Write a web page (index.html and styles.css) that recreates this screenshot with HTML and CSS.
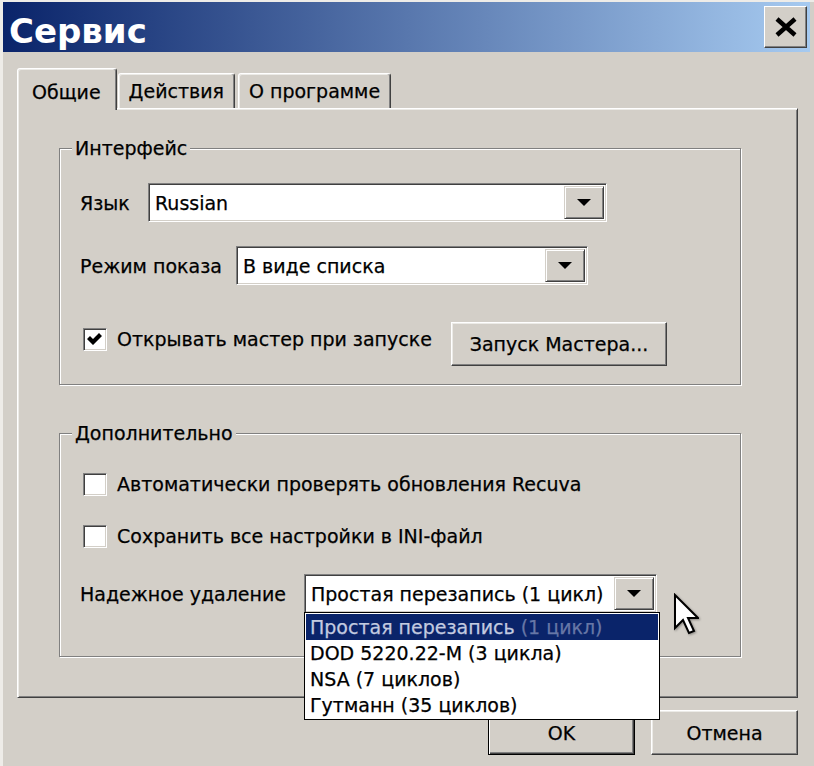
FILE: index.html
```html
<!DOCTYPE html>
<html lang="ru">
<head>
    <meta charset="UTF-8">
    <title>Сервис</title>
    <link rel="stylesheet" href="styles.css">
</head>
<body>
    <div class="window">
        <div class="titlebar">
            <span class="title">Сервис</span>
            <button class="close-btn" type="button">
                <svg width="24" height="20" viewBox="0 0 24 20">
                    <path d="M3 2 L21 18 M21 2 L3 18" stroke="#000" stroke-width="4.5" fill="none"/>
                </svg>
            </button>
        </div>

        <div class="content">
            <div class="tabs">
                <div class="tab active">Общие</div>
                <div class="tab">Действия</div>
                <div class="tab tab-about">О программе</div>
            </div>

            <div class="panel">
                <fieldset class="group group-ui">
                    <legend>Интерфейс</legend>
                    <div class="row">
                        <label class="label-lang">Язык</label>
                        <div class="combo combo-lang">
                            <span class="combo-value">Russian</span>
                            <span class="combo-btn"><i class="arrow"></i></span>
                        </div>
                    </div>
                    <div class="row row-mode">
                        <label class="label-mode">Режим показа</label>
                        <div class="combo combo-mode">
                            <span class="combo-value">В виде списка</span>
                            <span class="combo-btn"><i class="arrow"></i></span>
                        </div>
                    </div>
                    <div class="row row-wizard">
                        <label class="check check-wizard">
                            <span class="box">
                                <svg width="16" height="13" viewBox="0 0 16 13">
                                    <polygon points="0,6 3,3 6,6 12,0 15,3 6,12" fill="#000"/>
                                </svg>
                            </span>
                            Открывать мастер при запуске
                        </label>
                        <button class="btn btn-wizard" type="button">Запуск Мастера...</button>
                    </div>
                </fieldset>

                <fieldset class="group group-extra">
                    <legend>Дополнительно</legend>
                    <div class="row">
                        <label class="check">
                            <span class="box"></span>
                            Автоматически проверять обновления Recuva
                        </label>
                    </div>
                    <div class="row row-ini">
                        <label class="check">
                            <span class="box"></span>
                            Сохранить все настройки в INI-файл
                        </label>
                    </div>
                    <div class="row row-erase">
                        <label class="label-erase">Надежное удаление</label>
                        <div class="combo combo-erase">
                            <span class="combo-value">Простая перезапись (1 цикл)</span>
                            <span class="combo-btn"><i class="arrow"></i></span>

                            <ul class="dropdown">
                                <li class="selected"><span class="sel-main">Простая перезапись</span> <span class="sel-dim">(1 цикл)</span></li>
                                <li>DOD 5220.22-M (3 цикла)</li>
                                <li>NSA (7 циклов)</li>
                                <li>Гутманн (35 циклов)</li>
                            </ul>

                            <svg class="cursor" width="26" height="42" viewBox="0 0 26 42">
                                <polygon points="2,2 2,35 10,27 16,40 21,38 15,25 25,25" fill="#fff" stroke="#000" stroke-width="2" stroke-linejoin="miter"/>
                            </svg>
                        </div>
                    </div>
                </fieldset>
            </div>

            <div class="footer">
                <button class="btn btn-default" type="button">OK</button>
                <button class="btn" type="button">Отмена</button>
            </div>
        </div>
    </div>
</body>
</html>
```

FILE: styles.css
```css
body {
    margin: 0;
    font-family: 'DejaVu Sans', 'Liberation Sans', sans-serif;
    font-size: 19px;
    color: #000;
    -webkit-text-stroke: 0.25px;
}

.window {
    width: 814px;
    height: 766px;
    box-sizing: border-box;
    padding-top: 2px;
    background-color: #d3cfc8;
    box-shadow: inset 3px 2px 0 #eeece8;
    overflow: hidden;
}

/* title bar */

.titlebar {
    height: 50px;
    margin: 0 4px 0 3px;
    padding: 0 3px 0 6px;
    display: flex;
    align-items: center;
    justify-content: space-between;
    background: linear-gradient(to right, #0a246a, #a6caf0);
}

.title {
    padding-top: 8px;
    font-size: 34px;
    font-weight: bold;
    line-height: 40px;
    color: #fff;
    -webkit-text-stroke: 0;
}

.close-btn {
    width: 43px;
    height: 42px;
    padding: 0;
    display: flex;
    align-items: center;
    justify-content: center;
    background-color: #d3cfc8;
    border: 1px solid;
    border-color: #fff #404040 #404040 #fff;
    box-shadow: inset -1px -1px 0 #808080;
}

.content {
    padding: 16px 16px 0 17px;
}

/* tabs */

.tabs {
    height: 40px;
    display: flex;
    align-items: flex-end;
    gap: 1px;
}

.tab {
    height: 35px;
    box-sizing: border-box;
    padding: 0 10px;
    display: flex;
    align-items: center;
    background-color: #d3cfc8;
    border: 1px solid;
    border-bottom: 0;
    border-color: #fff #404040 transparent #fff;
    border-radius: 3px 3px 0 0;
    box-shadow: inset -1px 0 0 #808080, inset 1px 1px 0 #ecebe7;
}

.tab.active {
    position: relative;
    z-index: 1;
    height: 42px;
    margin-bottom: -2px;
    padding: 4px 15px 0 14px;
}

.tab-about {
    margin-left: 2px;
}

.panel {
    height: 590px;
    box-sizing: border-box;
    padding: 28px 56px 0 41px;
    border: 1px solid;
    border-color: #fff #404040 #404040 #fff;
    box-shadow: inset 1px 1px 0 #ecebe7, inset -1px -1px 0 #808080;
}

/* groups */

.group {
    margin: 0;
    min-width: 0;
    padding: 24px 20px 18px 20px;
    border: 1px solid #808080;
    box-shadow: inset 1px 1px 0 #fff, 1px 1px 0 #fff;
}

.group legend {
    margin-left: -8px;
    padding: 0 3px;
    line-height: 22px;
    background-color: #d3cfc8;
}

.group-extra {
    margin-top: 37px;
    padding: 28px 20px 43px 20px;
}

.row {
    display: flex;
    align-items: center;
}

.row-mode {
    margin-top: 24px;
}

.row-wizard {
    margin-top: 37px;
    align-items: flex-start;
}

.row-ini {
    margin-top: 28px;
}

.row-erase {
    margin-top: 26px;
}

.label-lang {
    width: 68px;
}

.label-mode {
    width: 156px;
}

.label-erase {
    width: 224px;
}

/* combo boxes */

.combo {
    position: relative;
    height: 39px;
    box-sizing: border-box;
    padding: 2px;
    display: flex;
    background-color: #fff;
    border: 1px solid;
    border-color: #808080 #fff #fff #808080;
    box-shadow: inset 1px 1px 0 #404040, inset -1px -1px 0 #d3cfc8;
}

.combo-lang {
    width: 459px;
}

.combo-mode {
    width: 352px;
}

.combo-erase {
    width: 353px;
}

.combo-value {
    flex: 1;
    padding-left: 4px;
    display: flex;
    align-items: center;
    white-space: nowrap;
}

.combo-btn {
    width: 40px;
    box-sizing: border-box;
    display: flex;
    align-items: center;
    justify-content: center;
    background-color: #d3cfc8;
    border: 1px solid;
    border-color: #d3cfc8 #404040 #404040 #d3cfc8;
    box-shadow: inset 1px 1px 0 #fff, inset -1px -1px 0 #808080;
}

.arrow {
    width: 0;
    height: 0;
    border-left: 7px solid transparent;
    border-right: 7px solid transparent;
    border-top: 7px solid #000;
}

.dropdown {
    position: absolute;
    z-index: 10;
    top: 100%;
    left: -1px;
    width: 356px;
    box-sizing: border-box;
    margin: 0;
    padding: 1px;
    list-style: none;
    background-color: #fff;
    border: 1px solid #000;
}

.dropdown li {
    height: 26px;
    padding-left: 4px;
    line-height: 26px;
    white-space: nowrap;
}

.dropdown li.selected {
    background-color: #0a246a;
}

.sel-main {
    color: #c3cbe0;
}

.sel-dim {
    color: #6777a6;
}

.cursor {
    position: absolute;
    z-index: 11;
    left: 368px;
    top: 18px;
    filter: drop-shadow(1px 1px 1px rgba(0, 0, 0, 0.35));
}

/* check boxes */

.check {
    display: flex;
    align-items: center;
    line-height: 24px;
    white-space: nowrap;
}

.check-wizard {
    width: 371px;
    margin-top: 5px;
}

.box {
    width: 24px;
    height: 23px;
    box-sizing: border-box;
    margin: 0 10px 0 3px;
    display: flex;
    align-items: center;
    justify-content: center;
    background-color: #fff;
    border: 1px solid;
    border-color: #808080 #fff #fff #808080;
    box-shadow: inset 1px 1px 0 #404040, inset -1px -1px 0 #d3cfc8;
}

/* buttons */

.btn {
    height: 45px;
    width: 147px;
    padding: 0;
    font-family: inherit;
    font-size: 19px;
    color: #000;
    background-color: #d3cfc8;
    border: 1px solid;
    border-color: #fff #404040 #404040 #fff;
    box-shadow: inset -1px -1px 0 #808080, inset 1px 1px 0 #ecebe7;
}

.btn-wizard {
    width: 216px;
    height: 44px;
}

.btn-default {
    border-color: #000;
    box-shadow: inset 1px 1px 0 #fff, inset -1px -1px 0 #404040, inset -2px -2px 0 #808080;
}

.footer {
    margin-top: 12px;
    display: flex;
    justify-content: flex-end;
    gap: 16px;
}
```
